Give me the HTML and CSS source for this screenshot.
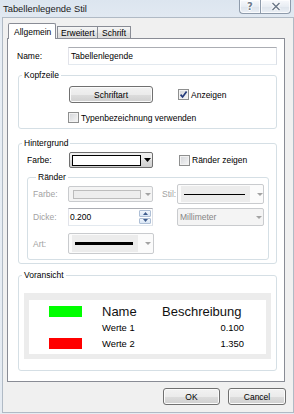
FILE: index.html
```html
<!DOCTYPE html>
<html lang="de">
<head>
<meta charset="utf-8">
<title>Tabellenlegende Stil</title>
<link rel="stylesheet" href="styles.css">
</head>
<body>
<div class="window">
  <div class="titlebar">
    <span class="title">Tabellenlegende Stil</span>
    <div class="caption-btns">
      <span class="cap-btn help">?</span>
      <span class="cap-btn close">
        <svg width="10" height="9" viewBox="0 0 10 9"><path d="M1.5 1 L8.5 8 M8.5 1 L1.5 8" stroke="#ffffff" stroke-width="3.4" fill="none"/><path d="M1.5 1 L8.5 8 M8.5 1 L1.5 8" stroke="#6f7c8c" stroke-width="1.6" fill="none"/></svg>
      </span>
    </div>
  </div>
  <div class="client">
    <div class="tabs">
      <span class="tab active">Allgemein</span>
      <span class="tab t-erw">Erweitert</span>
      <span class="tab t-sch">Schrift</span>
    </div>
    <div class="panel">
      <div class="name-row">
        <span class="name-lbl">Name:</span>
        <span class="textbox name-box">Tabellenlegende</span>
      </div>

      <fieldset class="group kopf">
        <legend>Kopfzeile</legend>
        <div class="row kopf-r1">
          <span class="btn font-btn">Schriftart</span>
          <span class="check checked"><svg width="9" height="9" viewBox="0 0 9 9"><path d="M1.6 4.6 L3.6 7 L7.6 1.6" stroke="#23397a" stroke-width="1.7" fill="none"/></svg></span>
          <span class="chk-lbl">Anzeigen</span>
        </div>
        <div class="row kopf-r2">
          <span class="check"></span>
          <span class="chk-lbl">Typenbezeichnung verwenden</span>
        </div>
      </fieldset>

      <fieldset class="group hinter">
        <legend>Hintergrund</legend>
        <div class="row farbe-row">
          <span class="farbe-lbl">Farbe:</span>
          <span class="combo combo-color">
            <span class="swatch"></span>
            <svg class="arr" width="7" height="4" viewBox="0 0 7 4"><path d="M0 0 H7 L3.5 4 Z" fill="#000"/></svg>
          </span>
          <span class="check rz-check"></span>
          <span class="chk-lbl">Ränder zeigen</span>
        </div>

        <fieldset class="group raender">
          <legend>Ränder</legend>
          <div class="row rr rr-a">
            <span class="dlbl">Farbe:</span>
            <span class="combo dis c-farbe">
              <span class="dswatch"></span>
              <svg class="darr" width="6" height="3" viewBox="0 0 6 3"><path d="M0 0 H6 L3 3 Z" fill="#a3a3a3"/></svg>
            </span>
            <span class="dlbl stil-lbl">Stil:</span>
            <span class="combo dis c-stil">
              <span class="line-area"><span class="line thin"></span></span>
              <svg class="darr" width="6" height="3" viewBox="0 0 6 3"><path d="M0 0 H6 L3 3 Z" fill="#a3a3a3"/></svg>
            </span>
          </div>
          <div class="row rr rr-b">
            <span class="dlbl">Dicke:</span>
            <span class="spin">
              <span class="spin-val">0.200</span>
              <span class="spin-btns">
                <span class="sb"><svg width="5" height="3" viewBox="0 0 5 3"><path d="M0 3 H5 L2.5 0 Z" fill="#3f5c8c"/></svg></span>
                <span class="sb"><svg width="5" height="3" viewBox="0 0 5 3"><path d="M0 0 H5 L2.5 3 Z" fill="#3f5c8c"/></svg></span>
              </span>
            </span>
            <span class="combo dis c-mm">
              <span class="mm-text">Millimeter</span>
              <svg class="darr" width="6" height="3" viewBox="0 0 6 3"><path d="M0 0 H6 L3 3 Z" fill="#a3a3a3"/></svg>
            </span>
          </div>
          <div class="row rr rr-c">
            <span class="dlbl">Art:</span>
            <span class="combo dis c-art">
              <span class="line-area art-area"><span class="line thick"></span></span>
              <svg class="darr" width="6" height="3" viewBox="0 0 6 3"><path d="M0 0 H6 L3 3 Z" fill="#a3a3a3"/></svg>
            </span>
          </div>
        </fieldset>
      </fieldset>

      <fieldset class="group voransicht">
        <legend>Voransicht</legend>
        <div class="preview">
          <div class="ptable">
            <span class="hd hd-name">Name</span>
            <span class="hd hd-desc">Beschreibung</span>
            <span class="sw sw-green"></span>
            <span class="pname">Werte 1</span>
            <span class="pval">0.100</span>
            <span class="sw sw-red"></span>
            <span class="pname">Werte 2</span>
            <span class="pval">1.350</span>
          </div>
        </div>
      </fieldset>
    </div>
    <div class="buttons">
      <span class="btn ok-btn">OK</span>
      <span class="btn cancel-btn">Cancel</span>
    </div>
  </div>
</div>
</body>
</html>
```
FILE: styles.css
```css
* { box-sizing: border-box; }
html, body { margin: 0; padding: 0; }
body {
  width: 294px;
  height: 414px;
  overflow: hidden;
  font-family: "Liberation Sans", Arial, sans-serif;
  font-size: 8.5px;
  line-height: 10px;
  color: #000;
  background: #e4ebf2;
}
.window {
  width: 294px;
  height: 414px;
  display: flex;
  flex-direction: column;
  background: linear-gradient(#dce5ef, #e8eef5 40px, #e5ebf2);
}
.titlebar {
  height: 17px;
  flex: none;
  display: flex;
  align-items: flex-start;
}
.title {
  font-size: 9.4px;
  line-height: 17px;
  padding-left: 3px;
  color: #1b1b1b;
}
.caption-btns {
  margin-left: auto;
  margin-right: 3px;
  display: flex;
  height: 14px;
}
.cap-btn {
  height: 14px;
  border: 1px solid #8e9bab;
  border-top: none;
  background: linear-gradient(#f7f9fc, #e8edf3 50%, #dde4ec 51%, #eaeff5);
  display: flex;
  align-items: center;
  justify-content: center;
  box-shadow: inset 0 0 0 1px rgba(255,255,255,0.7);
}
.help {
  width: 21px;
  border-right: none;
  border-radius: 0 0 0 4px;
  font-family: "DejaVu Sans", sans-serif;
  font-weight: bold;
  font-size: 10px;
  line-height: 12px;
  color: #6f7c8c;
  text-shadow: 1px 0 #fff, -1px 0 #fff, 0 1px #fff, 0 -1px #fff;
}
.close {
  width: 31px;
  border-radius: 0 0 4px 0;
}

.client {
  flex: 1;
  margin: 0 0 1px 2px;
  border: 1px solid #b0bac5;
  background: #f0f0f0;
  display: flex;
  flex-direction: column;
}

.tabs {
  height: 21px;
  flex: none;
  padding-left: 5px;
  margin-bottom: -1px;
  display: flex;
  align-items: flex-end;
  position: relative;
  z-index: 1;
}
.tab {
  height: 12px;
  margin-bottom: 1px;
  border: 1px solid #898c95;
  border-bottom: none;
  background: linear-gradient(#f6f6f6, #e9e9e9 50%, #e0e0e0 51%, #dcdcdc);
  padding-top: 1px;
  line-height: 10px;
  white-space: nowrap;
}
.tab.active {
  width: 48px;
  height: 16px;
  margin-bottom: 0;
  background: #fff;
  padding-left: 5px;
  padding-top: 3px;
  border-radius: 2px 2px 0 0;
}
.t-erw { width: 41px; padding-left: 3px; margin-left: 1px; }
.t-sch { width: 34px; padding-left: 4px; margin-left: -1px; }

.panel {
  flex: none;
  margin-left: 4px;
  width: 278px;
  height: 344px;
  border: 1px solid #898c95;
  background: #fff;
  padding: 8px 7px 0 10px;
}

.name-row {
  display: flex;
  align-items: center;
  height: 18px;
}
.name-lbl {
  width: 51px;
  margin-left: -1px;
}
.textbox {
  height: 18px;
  border: 1px solid;
  border-color: #abadb3 #dbdfe6 #e3e9ef #e2e3ea;
  background: #fff;
  line-height: 16px;
  padding-left: 2px;
}
.name-box { width: 209px; }

.group {
  margin: 0;
  padding: 0;
  min-width: 0;
  border: 1px solid #d5dfe5;
  border-radius: 3px;
}
.group > legend {
  padding: 0 2px;
  margin-left: 3px;
  line-height: 10px;
  font-size: 8.5px;
  color: #000;
}

.row {
  display: flex;
  align-items: center;
}

.group.kopf { margin-top: 5px; padding-bottom: 5px; }
.kopf-r1 { margin-top: 6px; height: 17px; padding-left: 50px; }
.kopf-r2 { margin-top: 9px; height: 11px; padding-left: 49px; }

.btn {
  display: flex;
  align-items: center;
  justify-content: center;
  height: 17px;
  border: 1px solid #707070;
  border-radius: 3px;
  background: linear-gradient(#f2f2f2, #ebebeb 50%, #dddddd 51%, #cfcfcf);
  box-shadow: inset 0 0 0 1px #fbfbfb;
  line-height: 10px;
}
.font-btn { width: 84px; }

.check {
  flex: none;
  width: 11px;
  height: 11px;
  border: 1px solid #8e8f8f;
  background: linear-gradient(135deg, #d2d4d8, #f7f7f7);
  box-shadow: inset 0 0 0 1px #f2f2f2;
  display: flex;
  align-items: center;
  justify-content: center;
}
.check.checked { margin-left: 25px; }
.chk-lbl { margin-left: 2px; white-space: nowrap; }

.group.hinter { margin-top: 9px; padding-bottom: 3px; }
.farbe-row { margin-top: 4px; height: 16px; }
.farbe-lbl { width: 42px; margin-left: 8px; }

.combo {
  flex: none;
  display: flex;
  align-items: center;
  border: 1px solid #707070;
  border-radius: 2px;
  background: linear-gradient(#f2f2f2, #ebebeb 50%, #dddddd 51%, #cfcfcf);
}
.combo-color {
  width: 84px;
  height: 16px;
  padding-left: 2px;
}
.swatch {
  width: 69px;
  height: 11px;
  border: 1px solid #000;
  background: #fff;
}
.arr { margin-left: 3px; }
.rz-check { margin-left: 26px; }

.group.raender {
  margin: 4px 0 0 8px;
  width: 242px;
  padding: 0 0 5px 5px;
}
.rr-a { margin-top: 2px; height: 20px; }
.rr-b { margin-top: 4px; height: 18px; }
.rr-c { margin-top: 7px; height: 21px; }

.dlbl {
  width: 35px;
  color: #a2a2a2;
  flex: none;
}
.stil-lbl { width: 24px; padding-left: 9px; }

.combo.dis {
  border-color: #c9cbce;
  background: #f4f4f4;
}
.c-farbe {
  width: 85px;
  height: 16px;
  padding-left: 4px;
}
.dswatch {
  width: 68px;
  height: 9px;
  border: 1px solid #bcbcbc;
  background: #ededed;
}
.darr { margin-left: 4px; }
.combo.c-stil {
  width: 87px;
  height: 20px;
  padding-left: 3px;
  background: #fbfbfb;
}
.line-area {
  height: 16px;
  width: 69px;
  background: #ececec;
  display: flex;
  align-items: center;
  padding-left: 3px;
}
.line {
  display: block;
  background: #000;
}
.line.thin { width: 61px; height: 1px; }
.c-stil .darr { margin-left: 7px; }

.spin {
  flex: none;
  display: flex;
  width: 85px;
  height: 18px;
  border: 1px solid;
  border-color: #abadb3 #dbdfe6 #e3e9ef #e2e3ea;
  background: #fff;
}
.spin-val {
  flex: 1;
  line-height: 14px;
  padding-left: 1px;
  padding-top: 1px;
}
.spin-btns {
  width: 12px;
  margin: 1px 1px 1px 0;
  display: flex;
  flex-direction: column;
  gap: 1px;
}
.sb {
  flex: 1;
  display: flex;
  align-items: center;
  justify-content: center;
  border: 1px solid #aebfd6;
  border-radius: 1px;
  background: linear-gradient(#f1f6fc, #d9e6f5);
}
.c-mm {
  width: 87px;
  height: 18px;
  margin-left: 24px;
  padding-left: 2px;
  border-radius: 2px;
}
.mm-text {
  width: 72px;
  color: #858585;
}
.c-mm .darr { margin-left: 4px; }

.combo.c-art {
  width: 86px;
  height: 21px;
  padding-left: 3px;
  background: #fbfbfb;
}
.art-area { width: 66px; height: 17px; }
.line.thick { width: 58px; height: 3px; }
.c-art .darr { margin-left: 7px; }

.group.voransicht { margin-top: 6px; padding-bottom: 11px; }
.preview {
  margin: 13px 0 0 5px;
  width: 247px;
  height: 66px;
  background: #ececec;
  padding: 7px 5px 5px 5px;
}
.ptable {
  height: 54px;
  background: #fff;
  padding-top: 4px;
  display: grid;
  grid-template-columns: 20px 33px 20px 60px 82px;
  grid-template-rows: 15px 16px 16px;
  align-items: center;
  font-size: 9.4px;
  line-height: 11px;
}
.hd {
  font-size: 13px;
  line-height: 15px;
  color: #111;
}
.hd-name { grid-column: 4; grid-row: 1; }
.hd-desc { grid-column: 5; grid-row: 1; }
.sw { grid-column: 2; height: 11px; }
.sw-green { background: #00ff00; }
.sw-red { background: #ff0000; }
.pname { grid-column: 4; }
.pval { grid-column: 5; text-align: right; }

.buttons {
  display: flex;
  justify-content: flex-end;
  gap: 8px;
  margin-top: 6px;
  margin-right: 7px;
}
.ok-btn { width: 57px; }
.cancel-btn { width: 58px; }
```
